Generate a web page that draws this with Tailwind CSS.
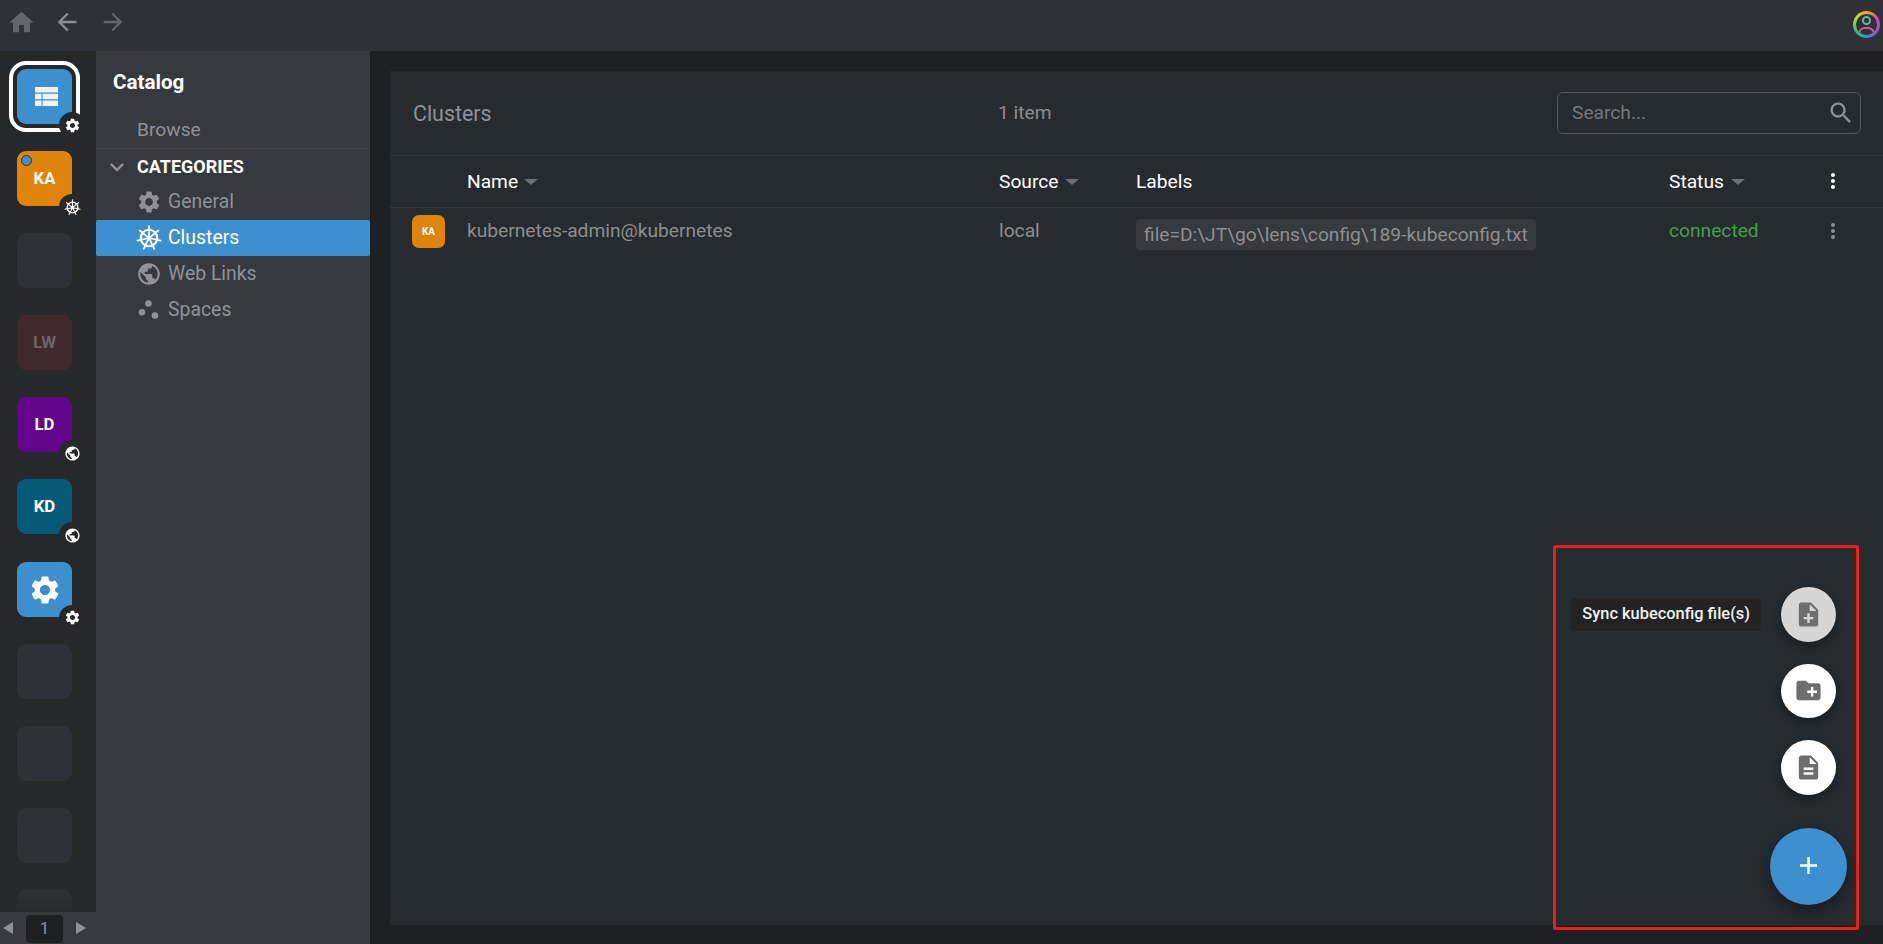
<!DOCTYPE html>
<html>
<head>
<meta charset="utf-8">
<script src="https://cdn.jsdelivr.net/npm/@tailwindcss/browser@4"></script>
<title>Catalog</title>
</head>
<body class="m-0 overflow-hidden bg-[#1e2124]">
<svg class="hidden" xmlns="http://www.w3.org/2000/svg">
  <symbol id="gear" viewBox="0 0 24 24"><path fill="currentColor" d="M19.14 12.94c.04-.3.06-.61.06-.94 0-.32-.02-.64-.07-.94l2.03-1.58a.49.49 0 0 0 .12-.61l-1.92-3.32a.488.488 0 0 0-.59-.22l-2.39.96c-.5-.38-1.03-.7-1.62-.94l-.36-2.54a.484.484 0 0 0-.48-.41h-3.84c-.24 0-.43.17-.47.41l-.36 2.54c-.59.24-1.13.57-1.62.94l-2.39-.96c-.22-.08-.47 0-.59.22L2.74 8.87c-.12.21-.08.47.12.61l2.03 1.58c-.05.3-.09.63-.09.94s.02.64.07.94l-2.03 1.58a.49.49 0 0 0-.12.61l1.92 3.32c.12.22.37.29.59.22l2.39-.96c.5.38 1.03.7 1.62.94l.36 2.54c.05.24.24.41.48.41h3.84c.24 0 .44-.17.47-.41l.36-2.54c.59-.24 1.13-.56 1.62-.94l2.39.96c.22.08.47 0 .59-.22l1.92-3.32c.12-.22.07-.47-.12-.61l-2.01-1.58zM12 15.6c-1.98 0-3.6-1.62-3.6-3.6s1.62-3.6 3.6-3.6 3.6 1.62 3.6 3.6-1.62 3.6-3.6 3.6z"/></symbol>
  <symbol id="globe" viewBox="0 0 24 24"><path fill="currentColor" d="M12 2C6.48 2 2 6.48 2 12s4.48 10 10 10 10-4.48 10-10S17.52 2 12 2zm-1 17.93c-3.95-.49-7-3.85-7-7.93 0-.62.08-1.21.21-1.79L9 15v1c0 1.1.9 2 2 2v1.93zm6.9-2.54c-.26-.81-1-1.39-1.9-1.39h-1v-3c0-.55-.45-1-1-1H8v-2h2c.55 0 1-.45 1-1V7h2c1.1 0 2-.9 2-2v-.41c2.93 1.19 5 4.06 5 7.41 0 2.08-.8 3.97-2.1 5.39z"/></symbol>
  <symbol id="helm" viewBox="0 0 24 24"><g fill="none" stroke="currentColor" stroke-linecap="round"><circle cx="12" cy="12" r="7.6" stroke-width="2"/><path stroke-width="1.6" d="M12 12V1M12 12 20.6 5.1M12 12 22.7 14.4M12 12 16.8 21.9M12 12 7.2 21.9M12 12 1.3 14.4M12 12 3.4 5.1"/></g><circle cx="12" cy="12" r="1.8" fill="currentColor"/></symbol>
</svg>

<div class="flex h-[944px] w-[1883px] flex-col font-['Roboto',sans-serif] text-[19.2px] text-[#8e9297]">
  <!-- top bar -->
  <header class="flex h-[51px] shrink-0 items-center bg-[#2e3136] text-[#62656b]">
    <svg class="ml-[7px] mb-[7px] h-[29px] w-[29px]" viewBox="0 0 24 24"><path fill="currentColor" d="M10 20v-6h4v6h5v-8h3L12 3 2 12h3v8z"/></svg>
    <svg class="ml-[17px] mb-[7px] h-[28px] w-[28px] text-[#8b8e93]" viewBox="0 0 24 24"><path fill="currentColor" d="M20 11H7.83l5.59-5.59L12 4l-8 8 8 8 1.41-1.41L7.83 13H20v-2z"/></svg>
    <svg class="ml-[18px] mb-[7px] h-[28px] w-[28px]" viewBox="0 0 24 24"><path fill="currentColor" d="M12 4l-1.41 1.41L16.17 11H4v2h12.17l-5.58 5.59L12 20l8-8z"/></svg>
    <div class="relative mb-[2px] ml-auto mr-[3px] h-[27px] w-[27px] overflow-hidden rounded-full bg-[conic-gradient(#f5a623,#e53fb0,#9b4de0,#3d90ce,#33c07a,#c8d62e,#f5a623)]">
      <div class="absolute inset-[3px] overflow-hidden rounded-full bg-[#2e3136]">
        <div class="absolute left-[6px] top-[2px] h-[9px] w-[9px] rounded-full border-[2px] border-[#4cc0a0]"></div>
        <div class="absolute left-[2px] top-[13px] h-[14px] w-[17px] rounded-full border-[2px] border-[#e0558f]"></div>
      </div>
    </div>
  </header>

  <div class="flex min-h-0 flex-1">
    <!-- hotbar -->
    <nav class="flex w-[96px] shrink-0 flex-col bg-[#26282a]">
      <div class="flex min-h-0 flex-1 flex-col gap-[27.1px] overflow-hidden pl-[17px] pt-[18px]">
        <div class="relative h-[55px] w-[55px] shrink-0 rounded-[9px] bg-[#3d90ce] outline-[4px] outline-offset-[4px] outline-white">
          <svg class="absolute left-[18px] top-[18px] h-[19px] w-[23px] text-white" viewBox="0 0 23 19"><path fill="#f2f2f2" d="M0 0h23v5.6H0zM0 6.7h6.5v5.6H0zM7.6 6.7H23v5.6H7.6zM0 13.4h6.5V19H0zM7.6 13.4H23V19H7.6z"/></svg>
          <span class="absolute left-[42px] top-[43px] flex h-[26px] w-[26px] items-center justify-center rounded-full bg-[#26282a] text-white"><svg class="h-[17px] w-[17px]"><use href="#gear"/></svg></span>
        </div>
        <div class="relative flex h-[55px] w-[55px] shrink-0 items-center justify-center rounded-[9px] bg-[#e08409] text-[16.8px] font-bold text-white">KA
          <span class="absolute left-[4px] top-[4px] h-[11px] w-[11px] rounded-full border border-[#333] bg-[#3d90ce]"></span>
          <span class="absolute left-[42px] top-[43px] flex h-[26px] w-[26px] items-center justify-center rounded-full bg-[#26282a] text-white"><svg class="h-[17px] w-[17px]"><use href="#helm"/></svg></span>
        </div>
        <div class="h-[55px] w-[55px] shrink-0 rounded-[9px] bg-[#2e3136]"></div>
        <div class="flex h-[55px] w-[55px] shrink-0 items-center justify-center rounded-[9px] bg-[#40292d] text-[16.8px] font-bold text-[#6c6567]">LW</div>
        <div class="relative flex h-[55px] w-[55px] shrink-0 items-center justify-center rounded-[9px] bg-[#62058a] text-[16.8px] font-bold text-white">LD
          <span class="absolute left-[42px] top-[43px] flex h-[26px] w-[26px] items-center justify-center rounded-full bg-[#26282a] text-white"><svg class="h-[17px] w-[17px]"><use href="#globe"/></svg></span>
        </div>
        <div class="relative flex h-[55px] w-[55px] shrink-0 items-center justify-center rounded-[9px] bg-[#055a78] text-[16.8px] font-bold text-white">KD
          <span class="absolute left-[42px] top-[43px] flex h-[26px] w-[26px] items-center justify-center rounded-full bg-[#26282a] text-white"><svg class="h-[17px] w-[17px]"><use href="#globe"/></svg></span>
        </div>
        <div class="relative flex h-[55px] w-[55px] shrink-0 items-center justify-center rounded-[9px] bg-[#3d90ce] pt-[1px] text-white">
          <svg class="h-[34px] w-[34px]"><use href="#gear"/></svg>
          <span class="absolute left-[42px] top-[43px] flex h-[26px] w-[26px] items-center justify-center rounded-full bg-[#26282a] text-white"><svg class="h-[17px] w-[17px]"><use href="#gear"/></svg></span>
        </div>
        <div class="h-[55px] w-[55px] shrink-0 rounded-[9px] bg-[#2e3136]"></div>
        <div class="h-[55px] w-[55px] shrink-0 rounded-[9px] bg-[#2e3136]"></div>
        <div class="h-[55px] w-[55px] shrink-0 rounded-[9px] bg-[#2e3136]"></div>
        <div class="h-[22px] w-[55px] shrink-0 rounded-t-[9px] bg-linear-to-b from-[#2e3136] to-[#27292b]"></div>
      </div>
      <div class="flex h-[32px] shrink-0 items-center bg-[#36393e] pl-[3px]">
        <span class="h-0 w-0 border-y-[6px] border-r-[10px] border-y-transparent border-r-[#8e9297]"></span>
        <span class="ml-[13px] mt-[1px] flex h-[28px] w-[37px] items-center justify-center rounded-[4px] bg-[#1e2124] text-[16.8px] text-[#8e9297]">1</span>
        <span class="ml-[13px] h-0 w-0 border-y-[6px] border-l-[10px] border-y-transparent border-l-[#8e9297]"></span>
      </div>
    </nav>

    <!-- catalog sidebar -->
    <aside class="w-[274px] shrink-0 bg-[#36393e]">
      <h2 class="pl-[17px] pt-[18px] text-[20.6px] leading-[26px] font-bold text-white">Catalog</h2>
      <div class="mt-[18px] flex h-[36px] items-center border-b border-[#41444a] pl-[41px] pb-[1px]">Browse</div>
      <div class="flex h-[35px] items-center pl-[7px] text-[18px] font-bold text-white">
        <svg class="h-[28px] w-[28px] text-[#8e9297]" viewBox="0 0 24 24"><path fill="currentColor" d="M7.41 8.59 12 13.17l4.59-4.58L18 10l-6 6-6-6z"/></svg>
        <span class="ml-[6px]">CATEGORIES</span>
      </div>
      <div class="flex h-[36px] items-center pl-[40px]"><svg class="h-[26px] w-[26px]"><use href="#gear"/></svg><span class="ml-[6px] text-[19.4px]">General</span></div>
      <div class="flex h-[36px] items-center rounded-[2px] bg-[#3d90ce] pl-[40px] text-white"><svg class="h-[26px] w-[26px]"><use href="#helm"/></svg><span class="ml-[6px] text-[19.4px]">Clusters</span></div>
      <div class="flex h-[36px] items-center pl-[40px]"><svg class="h-[26px] w-[26px]"><use href="#globe"/></svg><span class="ml-[6px] text-[19.4px]">Web Links</span></div>
      <div class="flex h-[35px] items-center pl-[40px]"><svg class="h-[26px] w-[26px]" viewBox="0 0 24 24"><g fill="currentColor"><circle cx="11.5" cy="6" r="3"/><circle cx="5.5" cy="14" r="3"/><circle cx="17.5" cy="17" r="3"/></g></svg><span class="ml-[6px] text-[19.4px]">Spaces</span></div>
    </aside>

    <!-- main -->
    <main class="min-w-0 flex-1 pb-[19px] pl-[20px] pt-[20px]">
      <section class="relative flex h-full flex-col bg-[#262b2f]">
        <div class="flex h-[85px] shrink-0 items-center border-b border-[#2e3338] pl-[23px]">
          <h1 class="w-[585px] pt-[2px] text-[21.4px] font-normal text-[#8e9297]">Clusters</h1>
          <span class="text-[#8e8e8e]">1 item</span>
          <div class="ml-auto mr-[22px] flex h-[42px] w-[304px] items-center justify-between rounded-[6px] border border-[#55585e] pl-[14px] pr-[5px] text-[#77797d]">
            <span>Search...</span>
            <svg class="h-[28px] w-[28px] text-[#8e9297]" viewBox="0 0 24 24"><path fill="currentColor" d="M15.5 14h-.79l-.28-.27C15.41 12.59 16 11.11 16 9.5 16 5.91 13.09 3 9.5 3S3 5.91 3 9.5 5.91 16 9.5 16c1.61 0 3.09-.59 4.23-1.57l.27.28v.79l5 4.99L20.49 19l-4.99-5zm-6 0C7.01 14 5 11.99 5 9.5S7.01 5 9.5 5 14 7.01 14 9.5 11.99 14 9.5 14z"/></svg>
          </div>
        </div>
        <div class="flex h-[52px] shrink-0 items-center border-b border-[#33383d] text-white">
          <div class="ml-[77px] flex w-[532px] items-center pt-[1px]">Name<span class="ml-[6px] h-0 w-0 border-x-[7px] border-t-[6px] border-x-transparent border-t-[#6c7075]"></span></div>
          <div class="flex w-[137px] items-center pt-[1px]">Source<span class="ml-[7px] h-0 w-0 border-x-[7px] border-t-[6px] border-x-transparent border-t-[#6c7075]"></span></div>
          <div class="w-[533px] pt-[1px]">Labels</div>
          <div class="flex w-[152px] items-center pt-[1px]">Status<span class="ml-[7px] h-0 w-0 border-x-[7px] border-t-[6px] border-x-transparent border-t-[#6c7075]"></span></div>
          <svg class="mb-[2px] h-[24px] w-[24px]" viewBox="0 0 24 24"><path fill="currentColor" d="M12 8c1.1 0 2-.9 2-2s-.9-2-2-2-2 .9-2 2 .9 2 2 2zm0 2c-1.1 0-2 .9-2 2s.9 2 2 2 2-.9 2-2-.9-2-2-2zm0 6c-1.1 0-2 .9-2 2s.9 2 2 2 2-.9 2-2-.9-2-2-2z"/></svg>
        </div>
        <div class="flex items-start pt-[7px] text-[#8e8e8e]">
          <div class="ml-[22px] flex h-[33px] w-[33px] items-center justify-center rounded-[7px] bg-[#e08409] text-[10px] font-bold text-white">KA</div>
          <div class="ml-[22px] w-[532px] pt-[4px] leading-[24px]">kubernetes-admin@kubernetes</div>
          <div class="w-[137px] pt-[4px] leading-[24px]">local</div>
          <div class="w-[533px] pt-[5px]"><span class="mt-[-1px] inline-block h-[31px] rounded-[4px] bg-[#36393e] px-[8px] leading-[31px]">file=D:\JT\go\lens\config\189-kubeconfig.txt</span></div>
          <div class="w-[152px] pt-[4px] leading-[24px] text-[#43a047]">connected</div>
          <svg class="mt-[4px] h-[24px] w-[24px]" viewBox="0 0 24 24"><path fill="currentColor" d="M12 8c1.1 0 2-.9 2-2s-.9-2-2-2-2 .9-2 2 .9 2 2 2zm0 2c-1.1 0-2 .9-2 2s.9 2 2 2 2-.9 2-2-.9-2-2-2zm0 6c-1.1 0-2 .9-2 2s.9 2 2 2 2-.9 2-2-.9-2-2-2z"/></svg>
        </div>

        <!-- floating actions -->
        <div class="absolute bottom-[20px] right-[36px] flex flex-col items-end">
          <div class="flex items-center">
            <span class="mr-[20px] flex h-[33px] items-center rounded-[4px] bg-[#232323] px-[11px] text-[16.4px] font-medium text-[#f0f0f0]">Sync kubeconfig file(s)</span>
            <span class="mr-[11px] flex h-[55px] w-[55px] items-center justify-center rounded-full bg-[#d6d6d6] text-[#6e6e6e] shadow-[0_4px_10px_rgba(0,0,0,0.35)]"><svg class="mb-[1px] h-[29px] w-[29px]" viewBox="0 0 24 24"><path fill="currentColor" d="M14 2H6c-1.1 0-1.99.9-1.99 2L4 20c0 1.1.89 2 1.99 2H18c1.1 0 2-.9 2-2V8l-6-6zm2 14h-3v3h-2v-3H8v-2h3v-3h2v3h3v2zm-3-7V3.5L18.5 9H13z"/></svg></span>
          </div>
          <span class="mr-[11px] mt-[22px] flex h-[54px] w-[55px] items-center justify-center rounded-full bg-white text-[#6e6e6e] shadow-[0_4px_10px_rgba(0,0,0,0.35)]"><svg class="mb-[1px] h-[29px] w-[29px]" viewBox="0 0 24 24"><path fill="currentColor" d="M20 6h-8l-2-2H4c-1.11 0-1.99.89-1.99 2L2 18c0 1.11.89 2 2 2h16c1.11 0 2-.89 2-2V8c0-1.11-.89-2-2-2zm-1 8h-3v3h-2v-3h-3v-2h3V9h2v3h3v2z"/></svg></span>
          <span class="mr-[11px] mt-[22px] flex h-[55px] w-[55px] items-center justify-center rounded-full bg-white text-[#6e6e6e] shadow-[0_4px_10px_rgba(0,0,0,0.35)]"><svg class="mb-[1px] h-[29px] w-[29px]" viewBox="0 0 24 24"><path fill="currentColor" d="M14 2H6c-1.1 0-1.99.9-1.99 2L4 20c0 1.1.89 2 1.99 2H18c1.1 0 2-.9 2-2V8l-6-6zm2 16H8v-2h8v2zm0-4H8v-2h8v2zm-3-5V3.5L18.5 9H13z"/></svg></span>
          <span class="mt-[33px] flex h-[77px] w-[77px] items-center justify-center rounded-full bg-[#3d90ce] text-white shadow-[0_6px_14px_rgba(0,0,0,0.35)]"><svg class="mb-[2px] h-[29px] w-[29px]" viewBox="0 0 24 24"><path fill="currentColor" d="M19 13h-6v6h-2v-6H5v-2h6V5h2v6h6v2z"/></svg></span>
        </div>
      </section>
    </main>
  </div>
</div>
<!-- annotation frame drawn over the screenshot -->
<div class="absolute left-[1553px] top-[545px] h-[385px] w-[306px] rounded-[2px] border-[3px] border-[#f01c14]"></div>
</body>
</html>
